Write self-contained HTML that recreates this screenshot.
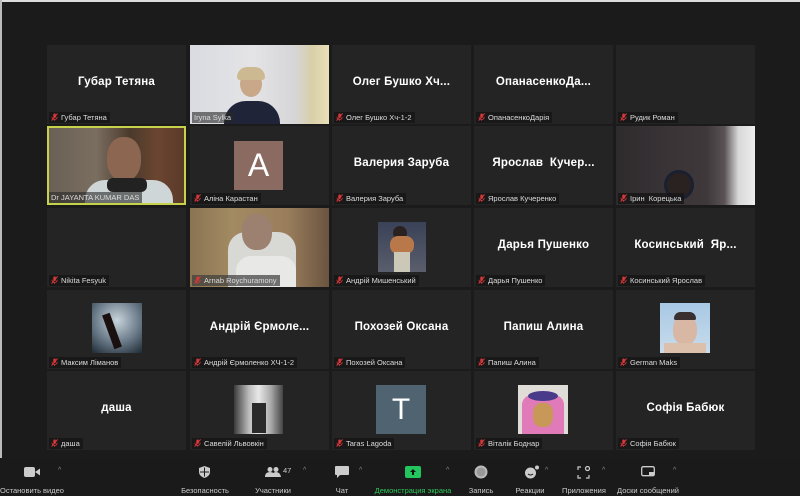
<!DOCTYPE html>
<html><head><meta charset="utf-8"><style>
*{margin:0;padding:0;box-sizing:border-box}
body{width:800px;height:496px;background:#1b1b1b;position:relative;overflow:hidden;font-family:"Liberation Sans","DejaVu Sans",sans-serif}
.bt{position:absolute;left:0;top:0;width:800px;height:2px;background:#ddd}
.bl{position:absolute;left:0;top:0;width:2px;height:496px;background:#bbb}
.t{position:absolute;width:139px;height:79px;background:#242424;overflow:hidden}
.c{position:absolute;left:0;right:0;top:31px;text-align:center;color:#fff;font-weight:bold;font-size:11.5px;letter-spacing:.2px}
.l{position:absolute;left:2px;bottom:1px;height:11px;background:rgba(20,20,20,.75);color:#ddd;font-size:7.5px;line-height:11px;padding:0 3px 0 2px;white-space:nowrap}
.m{display:inline-block;width:7px;height:8px;vertical-align:-1px;margin-right:3px}
.pic{position:absolute}
.tb{position:absolute;top:458px;left:0;width:800px;height:38px;background:#1a1a1a}
.i{position:absolute;color:#ccc;font-size:7.5px;white-space:nowrap;transform:translateX(-50%);top:28px}
.car{position:absolute;top:9px;color:#888;font-size:7px}
</style></head><body>
<div class="bt"></div><div class="bl"></div>
<svg width="0" height="0" style="position:absolute"><defs><symbol id="mic" viewBox="0 0 7 8"><rect x="2.3" y="0.5" width="2.6" height="4.5" rx="1.2" fill="#d9383a"/><path d="M1 3.8q0 2.6 2.6 2.6t2.6-2.6M3.6 6.4v1.3" stroke="#d9383a" stroke-width=".8" fill="none"/><path d="M0.6 7.6L6.6 0.4" stroke="#d9383a" stroke-width="1"/></symbol></defs></svg>

<!-- row 1 -->
<div class="t" style="left:47px;top:45px"><div class="c">Губар Тетяна</div><div class="l"><svg class="m"><use href="#mic"/></svg>Губар Тетяна</div></div>
<div class="t" style="left:190px;top:45px;background:linear-gradient(90deg,#d9dbe0 0%,#e4e4e6 45%,#d6d6d8 75%,#d9cfa8 88%,#e8dfb8 100%)">
<div class="pic" style="left:50px;top:26px;width:22px;height:26px;border-radius:50%;background:#c9a88a"></div>
<div class="pic" style="left:47px;top:22px;width:28px;height:13px;border-radius:14px 14px 4px 4px;background:#cdb991"></div>
<div class="pic" style="left:34px;top:56px;width:56px;height:26px;border-radius:22px 22px 0 0;background:#1f2438"></div>
<div class="l" style="background:rgba(40,40,40,.6)">Iryna Sylka</div></div>
<div class="t" style="left:332px;top:45px"><div class="c">Олег Бушко Хч...</div><div class="l"><svg class="m"><use href="#mic"/></svg>Олег Бушко Хч-1-2</div></div>
<div class="t" style="left:474px;top:45px"><div class="c">ОпанасенкоДа...</div><div class="l"><svg class="m"><use href="#mic"/></svg>ОпанасенкоДарія</div></div>
<div class="t" style="left:616px;top:45px"><div class="l"><svg class="m"><use href="#mic"/></svg>Рудик Роман</div></div>

<!-- row 2 -->
<div class="t" style="left:47px;top:126px;border:2px solid #c5d24a;background:linear-gradient(90deg,#6a6055 0%,#7a6e60 35%,#4a3a2c 60%,#6b4530 80%,#5a3a28 100%)">
<div class="pic" style="left:58px;top:9px;width:34px;height:44px;border-radius:45%;background:#8c6650"></div>
<div class="pic" style="left:36px;top:52px;width:88px;height:30px;border-radius:20px 20px 0 0;background:#cfd6d8"></div>
<div class="pic" style="left:58px;top:50px;width:40px;height:14px;border-radius:6px;background:#222"></div>
<div class="l" style="left:0;bottom:0;background:rgba(40,40,40,.6)">Dr JAYANTA KUMAR DAS</div></div>
<div class="t" style="left:190px;top:126px"><div class="pic" style="left:44px;top:15px;width:49px;height:49px;background:#8b6b61;color:#fff;font-size:32px;text-align:center;line-height:49px">A</div><div class="l"><svg class="m"><use href="#mic"/></svg>Аліна Карастан</div></div>
<div class="t" style="left:332px;top:126px"><div class="c">Валерия Заруба</div><div class="l"><svg class="m"><use href="#mic"/></svg>Валерия Заруба</div></div>
<div class="t" style="left:474px;top:126px"><div class="c">Ярослав&nbsp; Кучер...</div><div class="l"><svg class="m"><use href="#mic"/></svg>Ярослав Кучеренко</div></div>
<div class="t" style="left:616px;top:126px;background:linear-gradient(90deg,#2e2b2d 0%,#3a3437 40%,#3e383a 65%,#5a5254 78%,#d8d8d8 88%,#eeeeee 100%)">
<div class="pic" style="left:48px;top:44px;width:30px;height:30px;border-radius:50%;background:#2a2220;border:3px solid #1a2030"></div>
<div class="l"><svg class="m"><use href="#mic"/></svg>Ірин&nbsp; Корецька</div></div>

<!-- row 3 -->
<div class="t" style="left:47px;top:208px"><div class="l"><svg class="m"><use href="#mic"/></svg>Nikita Fesyuk</div></div>
<div class="t" style="left:190px;top:208px;background:linear-gradient(90deg,#8a7452 0%,#a28a62 30%,#9a7e5c 70%,#6a5440 100%)">
<div class="pic" style="left:38px;top:24px;width:68px;height:60px;border-radius:18px 18px 0 0;background:#d8d8d4"></div>
<div class="pic" style="left:52px;top:6px;width:30px;height:36px;border-radius:45%;background:#9c8070"></div>
<div class="pic" style="left:46px;top:48px;width:60px;height:34px;border-radius:15px 15px 0 0;background:#e8e8e6"></div>
<div class="l" style="background:rgba(60,60,60,.7)"><svg class="m"><use href="#mic"/></svg>Arnab Roychuramony</div></div>
<div class="t" style="left:332px;top:208px"><div class="pic" style="left:46px;top:14px;width:48px;height:50px;background:linear-gradient(180deg,#3a4258,#5a5e6c)"><div style="position:absolute;left:15px;top:4px;width:14px;height:14px;border-radius:50%;background:#2a2220"></div><div style="position:absolute;left:12px;top:14px;width:24px;height:18px;border-radius:8px;background:#b8784a"></div><div style="position:absolute;left:16px;top:30px;width:16px;height:20px;background:#ccc8b8"></div></div><div class="l"><svg class="m"><use href="#mic"/></svg>Андрій Мишенський</div></div>
<div class="t" style="left:474px;top:208px"><div class="c">Дарья Пушенко</div><div class="l"><svg class="m"><use href="#mic"/></svg>Дарья Пушенко</div></div>
<div class="t" style="left:616px;top:208px"><div class="c">Косинський&nbsp; Яр...</div><div class="l"><svg class="m"><use href="#mic"/></svg>Косинський Ярослав</div></div>

<!-- row 4 -->
<div class="t" style="left:47px;top:290px"><div class="pic" style="left:45px;top:13px;width:50px;height:50px;background:radial-gradient(circle at 50% 35%,#c8d4dc,#6a7a88 55%,#1e2a34)"><div style="position:absolute;left:16px;top:10px;width:8px;height:36px;background:#1a1010;transform:rotate(-20deg)"></div></div><div class="l"><svg class="m"><use href="#mic"/></svg>Максим Ліманов</div></div>
<div class="t" style="left:190px;top:290px"><div class="c">Андрій Єрмоле...</div><div class="l"><svg class="m"><use href="#mic"/></svg>Андрій Єрмоленко ХЧ-1-2</div></div>
<div class="t" style="left:332px;top:290px"><div class="c">Похозей Оксана</div><div class="l"><svg class="m"><use href="#mic"/></svg>Похозей Оксана</div></div>
<div class="t" style="left:474px;top:290px"><div class="c">Папиш Алина</div><div class="l"><svg class="m"><use href="#mic"/></svg>Папиш Алина</div></div>
<div class="t" style="left:616px;top:290px"><div class="pic" style="left:44px;top:13px;width:50px;height:50px;background:linear-gradient(180deg,#a8c8e4,#c8dcec)"><div style="position:absolute;left:13px;top:12px;width:24px;height:30px;border-radius:45%;background:#d8b8a4"></div><div style="position:absolute;left:14px;top:9px;width:22px;height:8px;border-radius:8px 8px 2px 2px;background:#3a3030"></div><div style="position:absolute;left:4px;top:40px;width:42px;height:10px;background:#dcc0ac"></div></div><div class="l"><svg class="m"><use href="#mic"/></svg>German Maks</div></div>

<!-- row 5 -->
<div class="t" style="left:47px;top:371px"><div class="c">даша</div><div class="l"><svg class="m"><use href="#mic"/></svg>даша</div></div>
<div class="t" style="left:190px;top:371px"><div class="pic" style="left:44px;top:14px;width:49px;height:49px;background:linear-gradient(90deg,#3a3a3a,#bbb 30%,#e8e8e8 50%,#aaa 75%,#444)"><div style="position:absolute;left:18px;top:18px;width:14px;height:30px;background:#2a2a2a"></div></div><div class="l"><svg class="m"><use href="#mic"/></svg>Савелій Львовкін</div></div>
<div class="t" style="left:332px;top:371px"><div class="pic" style="left:44px;top:14px;width:50px;height:49px;background:#4f6470;color:#fff;font-size:30px;text-align:center;line-height:49px">T</div><div class="l"><svg class="m"><use href="#mic"/></svg>Taras Lagoda</div></div>
<div class="t" style="left:474px;top:371px"><div class="pic" style="left:44px;top:14px;width:50px;height:49px;background:#e0dcd8"><div style="position:absolute;left:4px;top:10px;width:42px;height:39px;background:#e07ab8;border-radius:10px 10px 0 0"></div><div style="position:absolute;left:10px;top:6px;width:30px;height:10px;border-radius:50%;background:#4a3a8a"></div><div style="position:absolute;left:15px;top:18px;width:20px;height:24px;border-radius:40%;background:#c89858"></div></div><div class="l"><svg class="m"><use href="#mic"/></svg>Віталік Боднар</div></div>
<div class="t" style="left:616px;top:371px"><div class="c">Софія Бабюк</div><div class="l"><svg class="m"><use href="#mic"/></svg>Софія Бабюк</div></div>

<!-- toolbar -->
<div class="tb">
<svg style="position:absolute;left:24px;top:9px" width="16" height="10"><rect x="0" y="0" width="11" height="10" rx="2" fill="#ccc"/><path d="M11 5l5-3.5v7z" fill="#ccc"/></svg>
<span class="car" style="left:58px">^</span>
<div class="i" style="left:32px">Остановить видео</div>
<svg style="position:absolute;left:199px;top:8px" width="11" height="12"><path d="M5.5 0L11 2v4q0 4-5.5 6Q0 10 0 6V2z" fill="#ccc"/><path d="M5.5 1.5v9M1 6h9" stroke="#1a1a1a" stroke-width="1"/></svg>
<div class="i" style="left:205px">Безопасность</div>
<svg style="position:absolute;left:265px;top:9px" width="16" height="10"><circle cx="5" cy="2.5" r="2.5" fill="#ccc"/><circle cx="11" cy="2.5" r="2.5" fill="#ccc"/><path d="M0 10q0-5 5-5t5 5zM7 10q0-5 4-5t5 5z" fill="#ccc"/></svg>
<span style="position:absolute;left:283px;top:8px;color:#ccc;font-size:7.5px">47</span>
<span class="car" style="left:303px">^</span>
<div class="i" style="left:273px">Участники</div>
<svg style="position:absolute;left:335px;top:8px" width="14" height="12"><path d="M1 0h12a1 1 0 011 1v7a1 1 0 01-1 1H5l-3 3V9H1a1 1 0 01-1-1V1a1 1 0 011-1z" fill="#ccc"/></svg>
<span class="car" style="left:359px">^</span>
<div class="i" style="left:342px">Чат</div>
<svg style="position:absolute;left:405px;top:8px" width="16" height="12"><rect width="16" height="12" rx="2" fill="#22c55e"/><path d="M8 3l-3 3h2v3h2V6h2z" fill="#111"/></svg>
<span class="car" style="left:446px">^</span>
<div class="i" style="left:413px;color:#2fc65a">Демонстрация экрана</div>
<svg style="position:absolute;left:474px;top:7px" width="14" height="14"><circle cx="7" cy="7" r="6.5" fill="#bbb"/><circle cx="7" cy="7" r="4.5" fill="#999"/></svg>
<div class="i" style="left:481px">Запись</div>
<svg style="position:absolute;left:524px;top:7px" width="16" height="14"><circle cx="6.5" cy="8" r="5.5" fill="#ccc"/><circle cx="13" cy="2.5" r="2" fill="#ccc"/><path d="M4 9q2.5 2 5 0" stroke="#1a1a1a" fill="none"/></svg>
<span class="car" style="left:545px">^</span>
<div class="i" style="left:530px">Реакции</div>
<svg style="position:absolute;left:577px;top:8px" width="13" height="13"><path d="M1 4V1h3M12 9v3H9M1 9v3h3" stroke="#ccc" stroke-width="1.2" fill="none"/><circle cx="10.5" cy="2.5" r="2" stroke="#ccc" stroke-width="1.2" fill="none"/></svg>
<span class="car" style="left:602px">^</span>
<div class="i" style="left:584px">Приложения</div>
<svg style="position:absolute;left:641px;top:8px" width="14" height="12"><rect x=".7" y=".7" width="12.6" height="9" rx="1.5" stroke="#ccc" stroke-width="1.3" fill="none"/><rect x="8" y="6" width="5" height="3.5" fill="#ccc"/></svg>
<span class="car" style="left:673px">^</span>
<div class="i" style="left:648px">Доски сообщений</div>
</div>
</body></html>
